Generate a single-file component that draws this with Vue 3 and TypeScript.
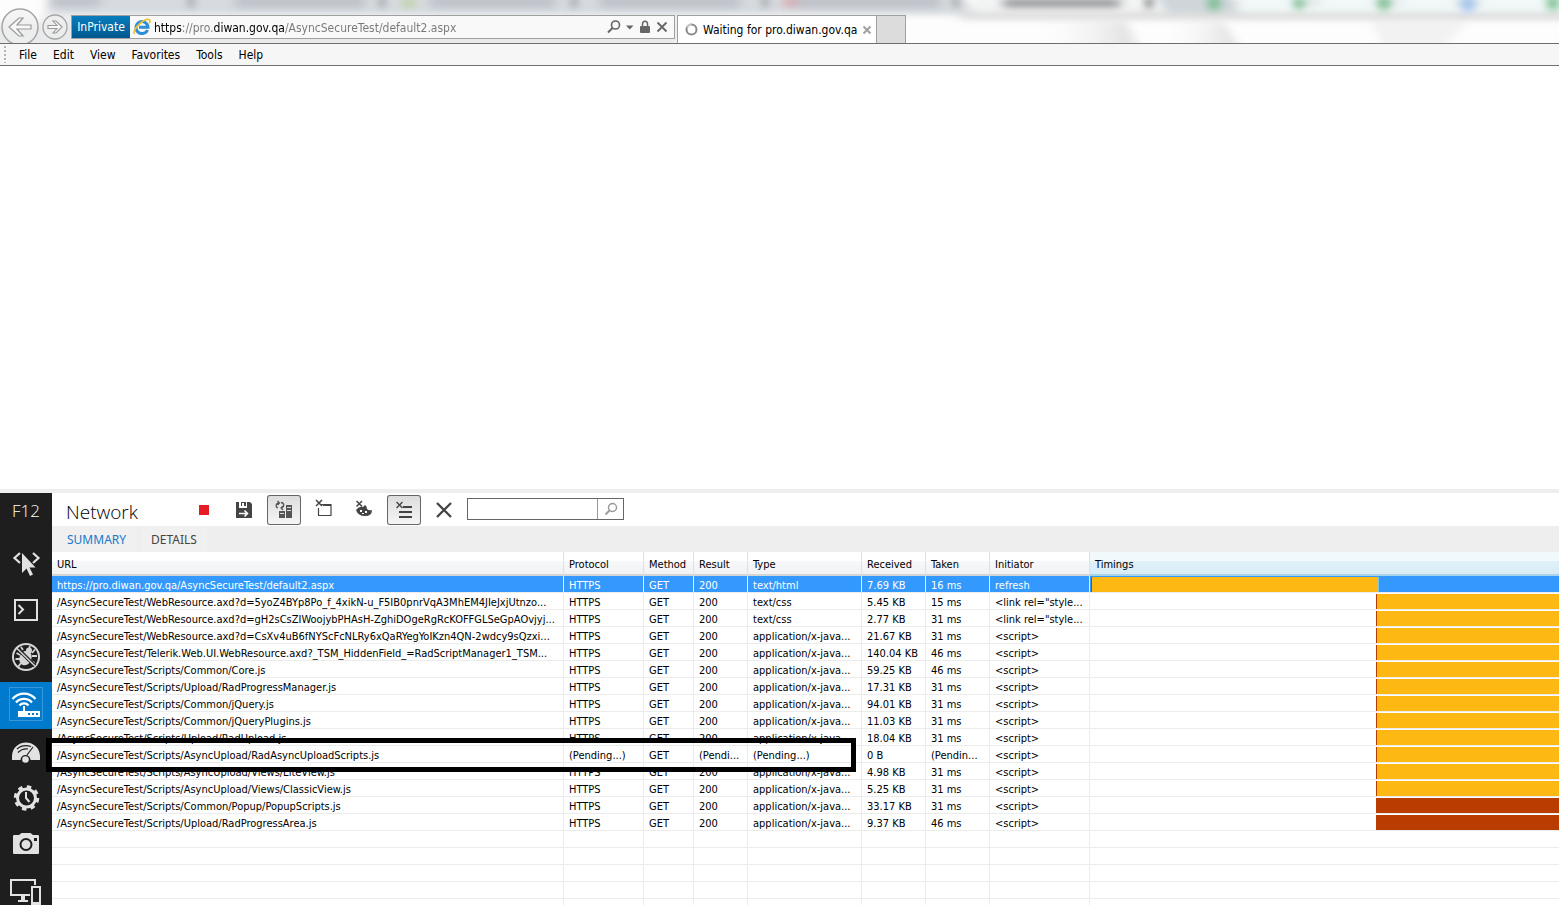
<script setup lang="ts">
import { ref } from 'vue'

interface NetworkRequest {
  url: string
  protocol: string
  method: string
  result: string
  type: string
  received: string
  taken: string
  initiator: string
  start: number
  length: number
  kind: 'page' | 'wait' | 'late'
}

const address = ref('https://pro.diwan.gov.qa/AsyncSecureTest/default2.aspx')
const filter = ref('')
const selected = ref(0)

const menus = ['File', 'Edit', 'View', 'Favorites', 'Tools', 'Help']

const columns = ['URL', 'Protocol', 'Method', 'Result', 'Type', 'Received', 'Taken', 'Initiator', 'Timings']
const columnKeys = ['url', 'protocol', 'method', 'result', 'type', 'received', 'taken', 'initiator'] as const

const js = 'application/x-java...'

function request(
  url: string,
  received: string,
  taken: string,
  type: string = js,
  initiator: string = '<script>',
  kind: NetworkRequest['kind'] = 'wait',
): NetworkRequest {
  return {
    url,
    protocol: 'HTTPS',
    method: 'GET',
    result: '200',
    type,
    received,
    taken,
    initiator,
    start: 61,
    length: 39,
    kind,
  }
}

const requests: NetworkRequest[] = [
  {
    ...request('https://pro.diwan.gov.qa/AsyncSecureTest/default2.aspx', '7.69 KB', '16 ms', 'text/html', 'refresh', 'page'),
    start: 0.25,
    length: 61.4,
  },
  request('/AsyncSecureTest/WebResource.axd?d=5yoZ4BYp8Po_f_4xikN-u_F5IB0pnrVqA3MhEM4JIeJxjUtnzo...', '5.45 KB', '15 ms', 'text/css', '<link rel="style...'),
  request('/AsyncSecureTest/WebResource.axd?d=gH2sCsZIWoojybPHAsH-ZghiDOgeRgRcKOFFGLSeGpAOvjyj...', '2.77 KB', '31 ms', 'text/css', '<link rel="style...'),
  request('/AsyncSecureTest/WebResource.axd?d=CsXv4uB6fNYScFcNLRy6xQaRYegYoIKzn4QN-2wdcy9sQzxi...', '21.67 KB', '31 ms'),
  request('/AsyncSecureTest/Telerik.Web.UI.WebResource.axd?_TSM_HiddenField_=RadScriptManager1_TSM...', '140.04 KB', '46 ms'),
  request('/AsyncSecureTest/Scripts/Common/Core.js', '59.25 KB', '46 ms'),
  request('/AsyncSecureTest/Scripts/Upload/RadProgressManager.js', '17.31 KB', '31 ms'),
  request('/AsyncSecureTest/Scripts/Common/jQuery.js', '94.01 KB', '31 ms'),
  request('/AsyncSecureTest/Scripts/Common/jQueryPlugins.js', '11.03 KB', '31 ms'),
  request('/AsyncSecureTest/Scripts/Upload/RadUpload.js', '18.04 KB', '31 ms'),
  {
    ...request('/AsyncSecureTest/Scripts/AsyncUpload/RadAsyncUploadScripts.js', '0 B', '(Pendin...', '(Pending...)'),
    protocol: '(Pending...)',
    result: '(Pendi...',
  },
  request('/AsyncSecureTest/Scripts/AsyncUpload/Views/LiteView.js', '4.98 KB', '31 ms'),
  request('/AsyncSecureTest/Scripts/AsyncUpload/Views/ClassicView.js', '5.25 KB', '31 ms'),
  request('/AsyncSecureTest/Scripts/Common/Popup/PopupScripts.js', '33.17 KB', '31 ms', js, '<script>', 'late'),
  request('/AsyncSecureTest/Scripts/Upload/RadProgressArea.js', '9.37 KB', '46 ms', js, '<script>', 'late'),
]
</script>

<template>
  <div class="window">
    <header class="chrome">
      <svg class="glass" width="100%" height="43" aria-hidden="true">
        <defs>
          <filter id="haze" x="-5%" y="-60%" width="110%" height="220%"><feGaussianBlur stdDeviation="6 3" /></filter>
          <filter id="soft" x="-5%" y="-60%" width="110%" height="220%"><feGaussianBlur stdDeviation="4" /></filter>
          <linearGradient id="streak">
            <stop offset="0" stop-color="#fff" stop-opacity="0" />
            <stop offset=".85" stop-color="#e4e4e4" />
            <stop offset="1" stop-color="#eee" />
          </linearGradient>
        </defs>
        <rect width="100%" height="43" fill="#fdfdfd" />
        <g filter="url(#soft)">
          <path d="M-20 16H680V50H-20Z" fill="#e9eaeb" />
          <path d="M-20 10H40V22H-20Z" fill="#fff" />
          <path d="M1030 20H1125L1142 50H1040Z" fill="url(#streak)" />
          <path d="M1160 20H1222L1242 50H1170Z" fill="url(#streak)" />
          <path d="M1370 20H1470L1440 50H1385Z" fill="#f2f2f2" />
        </g>
        <g filter="url(#haze)">
          <path d="M55 -8H960L975 15H45Z" fill="#d7dbe0" />
          <path d="M960 12H1600V20H960Z" fill="#dedede" />
          <path d="M975 -8H1145L1160 12H970Z" fill="#f3f4f4" />
          <path d="M1152 -8H1225L1240 12H1165Z" fill="#cfd6da" />
          <path d="M1240 -8H1600V11H1240Z" fill="#f1f8f8" />
        </g>
        <g filter="url(#haze)">
          <g fill="#bfc3c9">
            <path d="M50 -4H100V7H50ZM235 -4H365V8H235ZM430 -4H555V8H430ZM600 -4H740V8H600ZM795 -4H940V8H795Z" />
            <path d="M1215 0H1240V5H1215ZM1295 0H1320V5H1295ZM1375 0H1400V5H1375ZM1455 0H1480V5H1455Z" opacity=".5" />
          </g>
          <path d="M1003 -2H1120V8H1003Z" fill="#a0a2a5" />
          <path d="M404 -2H414V8H404Z" fill="#b9cf9c" />
          <path d="M784 -2H796V7H784Z" fill="#d9a5aa" />
        </g>
        <g filter="url(#soft)">
          <path d="M188 -2H194V6H188ZM379 -2H385V6H379ZM571 -2H577V6H571ZM762 -2H768V6H762ZM953 -2H959V6H953Z" fill="#888" />
          <path d="M1146 -2H1152V7H1146Z" fill="#444" />
          <g fill="#79bd8e">
            <circle cx="1214" cy="3" r="7" /><circle cx="1299" cy="3" r="6" /><circle cx="1384" cy="3" r="7" /><circle cx="1553" cy="3" r="7" />
          </g>
          <circle cx="1468" cy="4" r="8" fill="#a4c4ee" />
        </g>
      </svg>

      <div class="nav">
        <button class="nav-button back" type="button" aria-label="Back">
          <svg width="38" height="38" viewBox="0 0 38 38">
            <circle cx="19" cy="19" r="18" fill="#eee" fill-opacity=".6" stroke="#a5a5a5" stroke-width="1.5" />
            <path d="M8 19L18 10H22L16 17H30V21H16L22 28H18Z" fill="#f8f8f8" stroke="#999" stroke-width="1.2" />
          </svg>
        </button>
        <button class="nav-button forward" type="button" aria-label="Forward">
          <svg width="26" height="26" viewBox="0 0 26 26">
            <circle cx="13" cy="13" r="12" fill="#eee" fill-opacity=".6" stroke="#a5a5a5" stroke-width="1.3" />
            <path d="M20 13L14 7H11L15 11.500H6V14.500H15L11 19H14Z" fill="#f8f8f8" stroke="#999" stroke-width="1.100" />
          </svg>
        </button>
      </div>

      <div class="address-bar">
        <span class="inprivate">InPrivate</span>
        <svg class="site-icon" width="18" height="18" viewBox="0 0 18 18" aria-hidden="true">
          <path d="M14.500 12A6 6 0 1 1 15 9.300H6" fill="none" stroke="#2b8fd9" stroke-width="3" />
          <path d="M1.500 16C-1 12 10 .5 16 1.500C17.500 2 17 4 16.200 5.200" fill="none" stroke="#f0c22e" stroke-width="1.700" />
        </svg>
        <input v-model="address" class="address" type="text" aria-label="Address" spellcheck="false" />
        <button class="bar-button" type="button" aria-label="Search">
          <svg width="14" height="14" viewBox="0 0 14 14"><circle cx="8.500" cy="5" r="4" fill="none" stroke="#666" stroke-width="1.600" /><path d="M5.500 8L1 12.500" stroke="#666" stroke-width="2" /></svg>
        </button>
        <button class="bar-button" type="button" aria-label="Show address list">
          <svg width="8" height="14" viewBox="0 0 8 14"><path d="M0 5.500H7.500L3.700 9.500Z" fill="#666" /></svg>
        </button>
        <button class="bar-button" type="button" aria-label="Security report">
          <svg width="12" height="14" viewBox="0 0 12 14"><path d="M3.500 7V4A2.500 2.800 0 0 1 8.500 4V7" fill="none" stroke="#666" stroke-width="1.500" /><rect x="1" y="6" width="10" height="7" rx="1" fill="#666" /></svg>
        </button>
        <button class="bar-button" type="button" aria-label="Stop">
          <svg width="12" height="14" viewBox="0 0 12 14"><path d="M1.500 2.500L10.500 11.500M10.500 2.500L1.500 11.500" stroke="#666" stroke-width="1.800" /></svg>
        </button>
      </div>

      <div class="browser-tabs">
        <div class="browser-tab">
          <svg class="spinner" width="13" height="13" viewBox="0 0 13 13" aria-hidden="true">
            <circle cx="6.500" cy="6.500" r="5" fill="none" stroke="#8a8a8a" stroke-width="2" />
            <path d="M6.500 1.500A5 5 0 0 0 2 4.500" fill="none" stroke="#c9c9c9" stroke-width="2" />
          </svg>
          <span class="tab-title">Waiting for pro.diwan.gov.qa</span>
          <button class="tab-close" type="button" aria-label="Close tab">
            <svg width="10" height="10" viewBox="0 0 10 10"><path d="M1.500 1.500L8.500 8.500M8.500 1.500L1.500 8.500" stroke="#a0a0a0" stroke-width="2" /></svg>
          </button>
        </div>
        <button class="new-tab" type="button" aria-label="New tab"></button>
      </div>
    </header>

    <nav class="menu-bar" aria-label="Menu">
      <span class="grip" aria-hidden="true"></span>
      <button v-for="menu in menus" :key="menu" type="button">{{ menu }}</button>
    </nav>

    <main class="page"></main>

    <section class="devtools">
      <aside class="sidebar">
        <span class="brand">F12</span>
        <button type="button" aria-label="DOM Explorer">
          <svg viewBox="0 0 52 47">
            <path d="M20 12L14.500 17L20 22M33 12L38.500 17L33 22" fill="none" stroke="#e2e2e2" stroke-width="2.200" />
            <path d="M22 12V32L26.500 27.500L30 35L33 33.500L29.500 26.500H35.500Z" fill="#e2e2e2" />
          </svg>
        </button>
        <button type="button" aria-label="Console">
          <svg viewBox="0 0 52 47">
            <rect x="15" y="12" width="22" height="20" fill="none" stroke="#e2e2e2" stroke-width="2" />
            <path d="M18.500 17L23 21.500L18.500 26" fill="none" stroke="#e2e2e2" stroke-width="2" />
          </svg>
        </button>
        <button type="button" aria-label="Debugger">
          <svg viewBox="0 0 52 47">
            <circle cx="26" cy="22" r="13" fill="none" stroke="#d5d5d5" stroke-width="2" />
            <g stroke="#d5d5d5" stroke-width="1.800" fill="none">
              <path d="M20 20L16.500 18M20 24H15.500M21 28L18 32M32 18L35 14.500M32 21H37M31 26L34.500 28M23 15L21 12M29 14L30 11" />
            </g>
            <ellipse cx="25.500" cy="23" rx="6" ry="7.500" transform="rotate(22 25.500 23)" fill="#d5d5d5" />
            <circle cx="29" cy="15.500" r="3" fill="#d5d5d5" />
            <path d="M18 14L35 31" stroke="#1e1e1e" stroke-width="3.500" /><path d="M16 12.500L35.500 31.500" stroke="#d5d5d5" stroke-width="1.500" />
          </svg>
        </button>
        <button class="active" type="button" aria-label="Network">
          <svg viewBox="0 0 52 47">
            <rect x="9.500" y="5.500" width="33" height="33" fill="none" stroke="#71b5e6" stroke-dasharray="1 1" />
            <g fill="none" stroke="#fff" stroke-width="2.300">
              <path d="M12.500 17A15 15 0 0 1 35.500 17M16 20.500A10.500 10.500 0 0 1 32 20.500M19.500 23.500A6 6 0 0 1 28.500 23.500" />
            </g>
            <path d="M23 24H25V29H40V35H18V29H23Z" fill="#fff" />
            <path d="M28 31H30V33H28ZM32 31H34V33H32ZM36 31H38V33H36Z" fill="#007acc" />
          </svg>
        </button>
        <button type="button" aria-label="UI Responsiveness">
          <svg viewBox="0 0 52 47">
            <path d="M12 31V27C13 9 39 9 40 27V31H30.500A5 5 0 0 0 20.500 31Z" fill="#e2e2e2" />
            <path d="M17 20C21 16.500 26 16 31 17.500M18 23.500C21 20.500 25 19.500 28 20M27 26L33 18" fill="none" stroke="#1e1e1e" stroke-width="1.200" />
            <circle cx="25.500" cy="30.500" r="3.300" fill="#e2e2e2" />
          </svg>
        </button>
        <button type="button" aria-label="Profiler">
          <svg viewBox="0 0 52 47">
            <circle cx="26.500" cy="22" r="11" fill="none" stroke="#e2e2e2" stroke-width="3.500" stroke-dasharray="4.320 4.320" />
            <circle cx="26.500" cy="22" r="9" fill="none" stroke="#e2e2e2" stroke-width="3" />
            <path d="M26 16V22L29.500 26" fill="none" stroke="#e2e2e2" stroke-width="2" />
          </svg>
        </button>
        <button type="button" aria-label="Memory">
          <svg viewBox="0 0 52 47">
            <path d="M14 12H19L21.500 10H30.500L33 12H38Q39 12 39 13V30Q39 31 38 31H14Q13 31 13 30V13Q13 12 14 12Z" fill="#e2e2e2" />
            <circle cx="26" cy="21.500" r="5.500" fill="none" stroke="#1e1e1e" stroke-width="2" />
            <rect x="34" y="15" width="3" height="3" fill="#1e1e1e" />
          </svg>
        </button>
        <button type="button" aria-label="Emulation">
          <svg viewBox="0 0 52 47">
            <path d="M35 15V10H11V25H30M18 31H28" fill="none" stroke="#e2e2e2" stroke-width="2" />
            <path d="M21 26H25V30H21Z" fill="#e2e2e2" />
            <path d="M32 17H40V36H32Z" fill="#1e1e1e" stroke="#e2e2e2" stroke-width="2" /><path d="M32 32H40V36H32Z" fill="#e2e2e2" />
          </svg>
        </button>
      </aside>

      <div class="panel">
        <div class="toolbar">
          <h1>Network</h1>
          <button type="button" aria-label="Stop capturing">
            <svg viewBox="0 0 34 30"><rect x="12" y="10" width="10" height="10" fill="#e51c23" /></svg>
          </button>
          <button type="button" aria-label="Export captured traffic">
            <svg viewBox="0 0 34 30">
              <path d="M9 7H12V13H20V7H23L25 9V23H9Z" fill="#444" /><path d="M14 7H19V11H17V8H15V11H14Z" fill="#444" />
              <path d="M12 18.500H20M17.500 15.500L20.500 18.500L17.500 21.500" fill="none" stroke="#fff" stroke-width="1.600" />
            </svg>
          </button>
          <button class="pressed" type="button" aria-label="Always refresh from server" aria-pressed="true">
            <svg viewBox="0 0 34 30">
              <path d="M19 10H25V23H19ZM12 16H18V23H12Z" fill="#555" />
              <path d="M20 12.500H24M20 15.500H24M13 18.500H17" stroke="#ddd" stroke-width="1" />
              <path d="M11 13C8 12 9 8 12 8M10.500 6L12.500 8L10.500 10M14 7.500C18 8 17 12 15 13M16 15L14 13L16 11" fill="none" stroke="#555" stroke-width="1.300" />
            </svg>
          </button>
          <button type="button" aria-label="Clear browser cache">
            <svg viewBox="0 0 34 30">
              <path d="M14 9.500H24V20.500H11.500V13" fill="none" stroke="#444" stroke-width="1.200" /><path d="M16 9H24V11H16Z" fill="#444" />
              <path d="M9 5L15 11M15 5L9 11" stroke="#444" stroke-width="1.500" />
            </svg>
          </button>
          <button type="button" aria-label="Clear cookies">
            <svg viewBox="0 0 34 30">
              <path d="M9 15Q12 11 16 12L18 10Q20 11 20 14Q22 16 25 15Q25 21 18 21Q11 21 9 15Z" fill="#444" />
              <path d="M9.500 6L15 11.500M15 6L9.500 11.500" stroke="#444" stroke-width="1.500" />
              <path d="M13 15H15V17H13ZM18 16H20V18H18ZM15 18H17V19H15Z" fill="#fff" />
            </svg>
          </button>
          <button class="pressed" type="button" aria-label="Clear entries on navigate" aria-pressed="true">
            <svg viewBox="0 0 34 30">
              <path d="M16 12H25M12 17H25M12 22H25" stroke="#444" stroke-width="2" />
              <path d="M9.500 7L15.500 13M15.500 7L9.500 13" stroke="#444" stroke-width="1.400" />
            </svg>
          </button>
          <button type="button" aria-label="Clear">
            <svg viewBox="0 0 34 30"><path d="M10 8L24 22M24 8L10 22" stroke="#444" stroke-width="2.300" /></svg>
          </button>
          <form class="filter" role="search" @submit.prevent>
            <input v-model="filter" type="text" aria-label="Find" />
            <button type="submit" aria-label="Find next">
              <svg width="14" height="14" viewBox="0 0 14 14"><circle cx="8.500" cy="5.500" r="4" fill="none" stroke="#999" stroke-width="1.400" /><path d="M5.500 8.500L1.500 12.500" stroke="#999" stroke-width="1.800" /></svg>
            </button>
          </form>
        </div>

        <div class="views" role="tablist">
          <button class="current" type="button" role="tab" aria-selected="true">SUMMARY</button>
          <button type="button" role="tab" aria-selected="false">DETAILS</button>
        </div>

        <div class="grid">
          <table>
            <colgroup>
              <col class="c-url" /><col class="c-protocol" /><col class="c-method" /><col class="c-result" /><col class="c-type" />
              <col class="c-received" /><col class="c-taken" /><col class="c-initiator" /><col />
            </colgroup>
            <thead>
              <tr>
                <th v-for="column in columns" :key="column" scope="col">{{ column }}</th>
              </tr>
            </thead>
            <tbody>
              <tr v-for="(row, index) in requests" :key="row.url" :class="{ selected: index === selected }" @click="selected = index">
                <td v-for="key in columnKeys" :key="key">{{ row[key] }}</td>
                <td class="timing">
                  <div :class="['bar', row.kind]" :style="{ marginLeft: row.start + '%', width: row.length + '%' }"></div>
                </td>
              </tr>
              <tr v-for="blank in 5" :key="'blank' + blank" aria-hidden="true">
                <td v-for="column in columns" :key="column"></td>
              </tr>
            </tbody>
          </table>
        </div>
        <div class="callout" aria-hidden="true"></div>
      </div>
    </section>
  </div>
</template>

<style>
body {
  margin: 0;
}
</style>

<style scoped>
.window {
  display: flex;
  flex-direction: column;
  height: 100vh;
  overflow: hidden;
  background: #fff;
  color: #000;
  font-family: "DejaVu Sans Condensed", "DejaVu Sans", sans-serif;
  font-size: 12px;
}

button,
input {
  margin: 0;
  padding: 0;
  border: 0;
  background: none;
  color: inherit;
  font: inherit;
}

svg {
  display: block;
}

.chrome {
  position: relative;
  display: flex;
  height: 43px;
  overflow: hidden;
  border-bottom: 1px solid #6e6e6e;
}

.glass {
  position: absolute;
  inset: 0;
}

.nav,
.address-bar,
.browser-tabs {
  position: relative;
}

.nav {
  display: flex;
  align-items: center;
  gap: 3px;
  width: 70px;
  height: 38px;
  padding: 8px 0 0 1px;
}

.address-bar {
  display: flex;
  align-items: center;
  box-sizing: border-box;
  width: 604px;
  height: 24px;
  margin-top: 15px;
  padding-right: 6px;
  border: 1px solid #a0a0a0;
  background: rgba(255, 255, 255, 0.7);
}

.inprivate {
  width: 58px;
  line-height: 22px;
  background: linear-gradient(#0a7dbd, #00588f);
  color: #fff;
  text-align: center;
}

.site-icon {
  margin: 0 3px;
}

.address {
  flex: 1;
  min-width: 0;
  padding-top: 1px;
  line-height: 20px;
  background: linear-gradient(90deg, #000 0 28px, #777 28px 60px, #000 60px 131px, #777 131px);
  background-clip: text;
  -webkit-background-clip: text;
  color: transparent;
}

.bar-button {
  margin-left: 5px;
}

.browser-tabs {
  display: flex;
  margin: 15px 0 0 2px;
}

.browser-tab {
  display: flex;
  align-items: center;
  gap: 5px;
  box-sizing: border-box;
  width: 200px;
  padding: 0 5px 0 7px;
  border: solid #a0a0a0;
  border-width: 1px 1px 0;
  background: #fff;
}

.spinner {
  flex: none;
}

.tab-title {
  flex: 1;
  white-space: nowrap;
}

.new-tab {
  width: 29px;
  border: solid #a0a0a0;
  border-width: 1px 1px 0 0;
  background: #dcdcdc;
}

.menu-bar {
  display: flex;
  align-items: center;
  gap: 16px;
  height: 21px;
  border-bottom: 1px solid #6e6e6e;
  background: #f6f6f6;
}

.grip {
  width: 2px;
  height: 17px;
  margin-left: 4px;
  margin-right: -3px;
  background: repeating-linear-gradient(#b5b5b5 0 2px, transparent 2px 4px);
}

.page {
  flex: 423 1 0;
  background: #fff;
}

.devtools {
  display: flex;
  flex: 412 1 0;
  min-height: 0;
  border-top: 4px solid #eee;
}

.sidebar {
  display: flex;
  flex-direction: column;
  width: 52px;
  overflow: hidden;
  background: #1e1e1e;
  color: #fff;
}

.sidebar > * {
  flex: none;
}

.brand {
  height: 48px;
  font-family: "Open Sans", sans-serif;
  font-size: 17px;
  font-weight: 300;
  line-height: 36px;
  text-align: center;
}

.sidebar button {
  height: 47px;
}

.sidebar .active {
  background: #007acc;
}

.panel {
  position: relative;
  flex: 1;
  min-width: 0;
  display: flex;
  flex-direction: column;
}

.toolbar {
  display: flex;
  align-items: center;
  gap: 6px;
  height: 33px;
  flex: none;
}

.toolbar h1 {
  width: 115px;
  margin: 0;
  padding: 4px 0 0 14px;
  font-family: "Open Sans", sans-serif;
  font-size: 19px;
  font-weight: 300;
  line-height: 28px;
}

.toolbar > button {
  box-sizing: border-box;
  width: 34px;
  height: 30px;
  border-radius: 3px;
}

.toolbar > .pressed {
  background: linear-gradient(#dcdcdc, #f6f6f6);
  box-shadow: inset 0 0 0 1px #666;
}

.filter {
  display: flex;
  box-sizing: border-box;
  width: 157px;
  height: 22px;
  margin-bottom: 2px;
  border: 1px solid #666;
}

.filter input {
  flex: 1;
  min-width: 0;
  padding: 0 4px;
}

.filter button {
  width: 26px;
  padding-left: 6px;
  border-left: 1px solid #999;
}

.views {
  display: flex;
  flex: none;
  gap: 5px;
  height: 26px;
  background: #eee;
  font-family: "Noto Sans", "Open Sans", sans-serif;
}

.views button {
  padding: 0 10px;
  background: #f0f0f0;
  color: #444;
}

.views .current {
  padding-left: 15px;
  color: #1a78c8;
}

.grid {
  flex: 1;
  min-height: 0;
  overflow: hidden;
}

table {
  width: 100%;
  table-layout: fixed;
  border-spacing: 0;
  font-size: 11px;
  line-height: 12px;
}

.c-url { width: 512px; }
.c-protocol { width: 80px; }
.c-method { width: 50px; }
.c-result { width: 54px; }
.c-type { width: 114px; }
.c-received,
.c-taken { width: 64px; }
.c-initiator { width: 100px; }

th,
td {
  box-sizing: border-box;
  overflow: hidden;
  border-right: 1px solid #ececec;
  border-bottom: 1px solid #ececec;
  text-align: left;
  white-space: nowrap;
}

th {
  height: 24px;
  padding: 4px 0 0 5px;
  border-right-color: #dfe0e2;
  border-bottom: 2px solid #d5d5d5;
  background: linear-gradient(#fff 0 40%, #f7f8f9 40%, #f1f2f4);
  font-weight: 400;
}

th:last-child {
  border-right: 0;
  border-bottom-color: #a8d3e8;
  background: linear-gradient(#f1f9fc 0 40%, #e0f1f8 40%, #d8ecf6);
}

td {
  height: 17px;
  padding: 4px 0 0 5px;
}

td:last-child {
  padding: 0;
  border-right: 0;
}

.selected td {
  background: #3399ff;
  color: #fff;
}

.bar {
  box-sizing: border-box;
  height: 15px;
  margin-top: 1px;
  border-left: 1px solid #ba3d00;
  background: #fdb813;
}

.bar.page {
  border-right: 1px solid #7cc4e8;
}

.bar.late {
  background: #ba3d00;
}

.callout {
  position: absolute;
  top: 245px;
  left: -6px;
  box-sizing: border-box;
  width: 810px;
  height: 34px;
  border: 5px solid #000;
  pointer-events: none;
}
</style>
